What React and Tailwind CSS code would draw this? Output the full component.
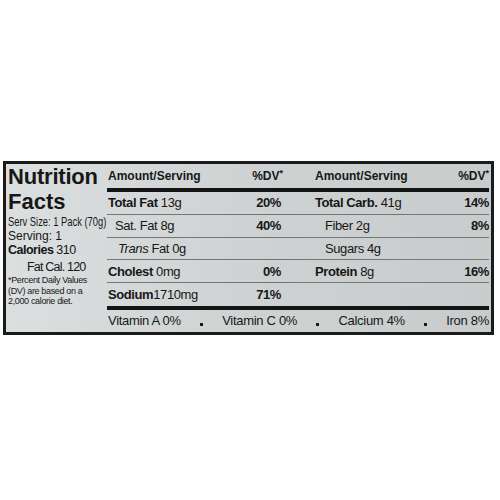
function Row({ l1, v1, l2, v2, last }) {
  return (
    <div className={`h-[23px] flex items-center text-[13px] tracking-[-0.4px] ${last ? "h-[22px]" : "border-b border-[#737676]"}`}>
      <div className="w-[174px] flex justify-between items-center pl-px">
        <span className="whitespace-nowrap">{l1}</span>
        <span className="font-bold">{v1}</span>
      </div>
      <div className="ml-[34px] flex-1 flex justify-between items-center">
        <span className="whitespace-nowrap">{l2}</span>
        <span className="font-bold">{v2}</span>
      </div>
    </div>
  );
}

function Dot() {
  return <span className="w-[3px] h-[3px] bg-[#1a1a1a] mt-[6px]" />;
}

export default function App() {
  return (
    <div className="w-[500px] h-[500px] bg-white pt-[161px] pl-[3px] font-['Liberation_Sans',Arial,sans-serif] text-[#171717]">
      <div className="w-[491px] h-[174px] border-[3px] border-[#1b1b1b] bg-linear-to-r from-[#dcdfdf] via-[#cfd2d2] to-[#c9cccc] flex">
        <div className="w-[101px] pl-[2px] shrink-0">
          <div className="text-[22px] leading-[25px] font-bold tracking-[-0.2px]">Nutrition</div>
          <div className="text-[22px] leading-[25px] font-bold">Facts</div>
          <div className="mt-px text-[12px] leading-[14px] whitespace-nowrap origin-left scale-x-[0.78]">Serv Size: 1 Pack (70g)</div>
          <div className="mt-px text-[12px] leading-[13px]">Serving: 1</div>
          <div className="text-[12.5px] leading-[14px] tracking-[-0.5px] whitespace-nowrap">
            <span className="font-bold">Calories</span> 310
          </div>
          <div className="mt-[3px] pl-[19px] text-[12.5px] leading-[14px] tracking-[-0.8px] whitespace-nowrap">Fat Cal. 120</div>
          <div className="mt-px text-[9px] leading-[10.5px] tracking-[-0.35px] whitespace-nowrap">
            *Percent Daily Values
            <br />
            (DV) are based on a
            <br />
            2,000 calorie diet.
          </div>
        </div>
        <div className="flex-1 flex flex-col pr-[2px]">
          <div className="h-[24px] flex items-center text-[12px] font-bold">
            <div className="w-[174px] flex justify-between items-center pl-px">
              <span>Amount/Serving</span>
              <span className="-mr-[2px]">%DV<span className="text-[9px] align-top">*</span></span>
            </div>
            <div className="ml-[34px] flex-1 flex justify-between items-center">
              <span>Amount/Serving</span>
              <span>%DV<span className="text-[9px] align-top">*</span></span>
            </div>
          </div>
          <div className="h-[4px] bg-[#141414]" />
          <Row
            l1={<><span className="font-bold">Total Fat</span> 13g</>}
            v1="20%"
            l2={<><span className="font-bold">Total Carb.</span> 41g</>}
            v2="14%"
          />
          <Row
            l1={<span className="pl-[7px]">Sat. Fat 8g</span>}
            v1="40%"
            l2={<span className="pl-[10px]">Fiber 2g</span>}
            v2="8%"
          />
          <Row
            l1={<span className="pl-[10px]"><span className="italic">Trans</span> Fat 0g</span>}
            v1=""
            l2={<span className="pl-[10px]">Sugars 4g</span>}
            v2=""
          />
          <Row
            l1={<><span className="font-bold">Cholest</span> 0mg</>}
            v1="0%"
            l2={<><span className="font-bold">Protein</span> 8g</>}
            v2="16%"
          />
          <Row
            l1={<><span className="font-bold">Sodium</span>1710mg</>}
            v1="71%"
            l2=""
            v2=""
            last
          />
          <div className="h-[4px] bg-[#141414]" />
          <div className="h-[22px] flex items-center justify-between text-[13px] tracking-[-0.3px] pl-px">
            <span>Vitamin A 0%</span>
            <Dot />
            <span>Vitamin C 0%</span>
            <Dot />
            <span>Calcium 4%</span>
            <Dot />
            <span>Iron 8%</span>
          </div>
        </div>
      </div>
    </div>
  );
}
